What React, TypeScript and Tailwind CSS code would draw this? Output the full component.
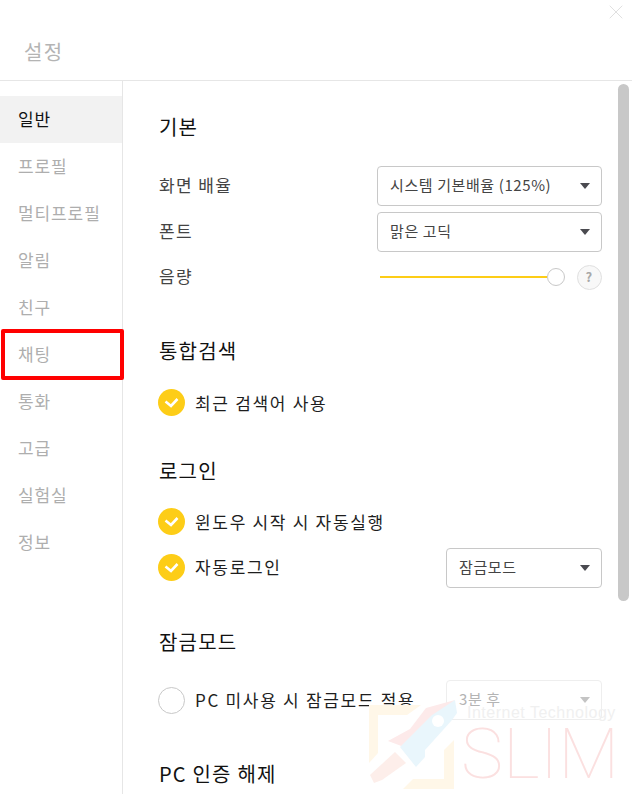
import { X } from "lucide-react";

const fontStack = "font-['Noto_Sans_CJK_KR',sans-serif]";

const menuItems = ["일반", "프로필", "멀티프로필", "알림", "친구", "채팅", "통화", "고급", "실험실", "정보"];

function Select({ label, disabled, className }: { label: string; disabled?: boolean; className: string }) {
  return (
    <div
      className={`flex h-10 items-center justify-between rounded-[4px] border pl-3 pr-[11px] text-[15px] tracking-[0.6px] ${
        disabled ? "border-[#eeeeee] text-[#b4b4b4]" : "border-[#c8c8c8] text-[#444444]"
      } ${className}`}
    >
      <span className="pb-[2px]">{label}</span>
      <span
        className={`h-0 w-0 border-x-[5px] border-t-[6px] border-x-transparent ${
          disabled ? "border-t-[#c4c4c4]" : "border-t-[#4a4a50]"
        }`}
      />
    </div>
  );
}

function Check({ on, label }: { on: boolean; label: string }) {
  return (
    <div className="-ml-px flex items-center gap-[10px]">
      {on ? (
        <span className="flex h-[27px] w-[27px] items-center justify-center rounded-full bg-[#fdcd17]">
          <svg width="15" height="11" viewBox="0 0 15 11" fill="none">
            <path d="M1.5 4.5 L7 9 L13.5 2" stroke="#ffffff" strokeWidth="2.6" />
          </svg>
        </span>
      ) : (
        <span className="h-[27px] w-[27px] rounded-full border border-[#c8c8c8]" />
      )}
      <span className="text-[17px] tracking-[1.7px] text-[#1e1e1e]">{label}</span>
    </div>
  );
}

function Heading({ children, className }: { children: string; className: string }) {
  return <h2 className={`text-[20px] leading-7 tracking-[1.2px] text-[#111111] ${className}`}>{children}</h2>;
}

// faint logo stamped over the lower right corner
function Watermark() {
  return (
    <div className="pointer-events-none absolute left-[360px] top-[695px] h-[99px] w-[272px]">
      <svg width="110" height="99" viewBox="0 0 110 99" className="absolute left-0 top-0" fill="none">
        <path d="M9 10 H61 L47 20 H18 V58 L9 68 Z" fill="#fff7e8" />
        <path d="M94 45 V94 H43 L53 84 H84 V55 Z" fill="#fff7e8" />
        <path d="M28 46 L50 34 L66 13 L95 5 L44 52 Z" fill="#fdeaea" />
        <path d="M40 52 L72 20 L95 5 L97 18 L92 25 L65 55 V62 L56 72 Z" fill="#e9f6fc" />
        <circle cx="78" cy="26" r="6" fill="#ffffff" />
        <path d="M10 80 L35 57 L46 68 L22 85 L14 88 Z" fill="#fdeeea" />
      </svg>
      <span className="absolute left-[107px] top-[10px] font-['Liberation_Sans',sans-serif] text-[16px] leading-4 tracking-[0.5px] text-[#f0f0f0]">
        Internet Technology
      </span>
      <span className="absolute left-[101px] top-[23px] font-['Roboto',sans-serif] text-[71px] font-thin leading-[71px] text-[#fbe0e0]">
        SLIM
      </span>
    </div>
  );
}

export default function App() {
  return (
    <div className={`relative h-[794px] w-[632px] overflow-hidden bg-white ${fontStack}`}>
      <header className="flex h-[81px] items-start justify-between border-b border-[#e6e6e6] pl-6">
        <h1 className="mt-[38px] text-[20px] leading-7 tracking-[1.4px] text-[#b4b4b4]">설정</h1>
        <X className="mr-1 h-6 w-6 text-[#e0e0e0]" strokeWidth={1} />
      </header>

      <div className="flex h-[713px]">
        <nav className="w-[123px] shrink-0 border-r border-[#e6e6e6] pt-[15px]">
          {menuItems.map((item, i) => (
            <div
              key={item}
              className={`flex h-[47px] items-center pb-[2px] pl-[18px] text-[17px] tracking-[0.9px] ${
                i === 0 ? "bg-[#f2f2f2] text-[#111111]" : "text-[#aeaeae]"
              }`}
            >
              {item}
            </div>
          ))}
        </nav>

        <main className="min-w-0 flex-1 pl-9 pr-[30px]">
          <Heading className="mt-[32px]">기본</Heading>

          <div className="mt-[25px] flex items-center justify-between text-[17px] tracking-[1.4px] text-[#444444]">
            <span className="pb-[3px]">화면 배율</span>
            <Select label="시스템 기본배율 (125%)" className="w-[225px]" />
          </div>
          <div className="mt-[6px] flex items-center justify-between text-[17px] tracking-[1.4px] text-[#444444]">
            <span className="pb-[3px]">폰트</span>
            <Select label="맑은 고딕" className="w-[225px]" />
          </div>
          <div className="mt-[7px] flex h-[36px] items-center justify-between text-[17px] tracking-[1.4px] text-[#444444]">
            <span className="pb-[2px]">음량</span>
            <div className="flex items-center">
              <div className="h-[2px] w-[167px] bg-[#fdcd17]" />
              <div className="h-[18px] w-[18px] rounded-full border border-[#c8c8c8] bg-white" />
              <div className="ml-[12px] flex h-[25px] w-[25px] items-center justify-center rounded-full border border-[#e0e0e0] bg-[#f8f8f8] text-[13px] font-bold text-[#a8a8a8]">
                ?
              </div>
            </div>
          </div>

          <Heading className="mt-[42px]">통합검색</Heading>
          <div className="mt-[24px]">
            <Check on label="최근 검색어 사용" />
          </div>

          <Heading className="mt-[41px]">로그인</Heading>
          <div className="mt-[23px]">
            <Check on label="윈도우 시작 시 자동실행" />
          </div>
          <div className="mt-[13px] flex items-center justify-between">
            <div className="mb-[2px]">
              <Check on label="자동로그인" />
            </div>
            <Select label="잠금모드" className="w-[156px]" />
          </div>

          <Heading className="mt-[40px]">잠금모드</Heading>
          <div className="mt-[24px] flex items-center justify-between">
            <Check on={false} label="PC 미사용 시 잠금모드 적용" />
            <Select label="3분 후" disabled className="w-[156px]" />
          </div>

          <Heading className="mt-[40px]">PC 인증 해제</Heading>
        </main>
      </div>

      {/* scrollbar thumb */}
      <div className="absolute left-[618px] top-[84px] h-[517px] w-[11px] rounded-[6px] bg-[#c8c8c8]" />

      <Watermark />

      {/* red annotation round the chat menu */}
      <div className="pointer-events-none absolute left-[1px] top-[329px] h-[51px] w-[123px] rounded-[2px] border-4 border-[#ff0000]" />
    </div>
  );
}
